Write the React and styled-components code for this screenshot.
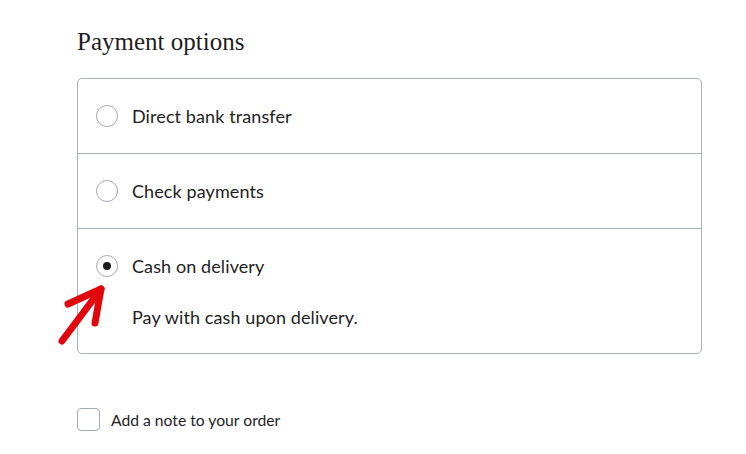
import React, { useState } from "react";
import styled, { createGlobalStyle } from "styled-components";

const GlobalStyle = createGlobalStyle`
  html, body {
    margin: 0;
    padding: 0;
    background: #ffffff;
  }
  body {
    font-family: "Lato", "Noto Sans", sans-serif;
    color: #1e1e1e;
  }
`;

const Page = styled.div`
  position: relative;
  width: 746px;
  height: 454px;
  padding: 27px 44px 0 77px;
  box-sizing: border-box;
`;

const Heading = styled.h2`
  margin: 0 0 22px;
  font-family: "Liberation Serif", "DejaVu Serif", serif;
  font-weight: 400;
  font-size: 25px;
  line-height: 29px;
  color: #1e1e1e;
`;

const OptionList = styled.div`
  border: 1px solid #a9b2bb;
  border-radius: 5px;
  width: 625px;
  box-sizing: border-box;
`;

const Option = styled.div`
  border-top: ${(p) => (p.$first ? "none" : "1px solid #a9b2bb")};
`;

const OptionHead = styled.label`
  display: flex;
  align-items: center;
  gap: 14px;
  height: 74px;
  padding: 0 18px;
  cursor: pointer;
  font-size: 18px;
  letter-spacing: 0.1px;
  color: #1e1e1e;
`;

const Radio = styled.span`
  width: 22px;
  height: 22px;
  border-radius: 50%;
  border: 1px solid #a3a9b0;
  box-sizing: border-box;
  display: flex;
  align-items: center;
  justify-content: center;
  flex: none;

  &::after {
    content: "";
    width: 8px;
    height: 8px;
    border-radius: 50%;
    background: #1e1e1e;
    display: ${(p) => (p.$checked ? "block" : "none")};
  }
`;

const Description = styled.p`
  margin: 0;
  padding: 2px 18px 24px 54px;
  font-size: 18px;
  letter-spacing: 0.1px;
  line-height: 24px;
  color: #1e1e1e;
`;

const NoteRow = styled.label`
  display: flex;
  align-items: center;
  gap: 11px;
  margin-top: 54px;
  font-size: 15.7px;
  color: #1e1e1e;
  cursor: pointer;
`;

const Checkbox = styled.span`
  width: 23px;
  height: 23px;
  border: 1px solid #a3a9b0;
  border-radius: 4px;
  box-sizing: border-box;
  flex: none;
`;

const Pointer = styled.svg`
  position: absolute;
  left: 52px;
  top: 278px;
  pointer-events: none;
`;

const options = [
  { id: "bacs", label: "Direct bank transfer" },
  { id: "cheque", label: "Check payments" },
  { id: "cod", label: "Cash on delivery", note: "Pay with cash upon delivery." },
];

export default function App() {
  const [selected, setSelected] = useState("cod");
  return (
    <>
      <GlobalStyle />
      <Page>
        <Heading>Payment options</Heading>
        <OptionList>
          {options.map((o, i) => (
            <Option key={o.id} $first={i === 0}>
              <OptionHead onClick={() => setSelected(o.id)}>
                <Radio $checked={selected === o.id} />
                {o.label}
              </OptionHead>
              {selected === o.id && o.note && <Description>{o.note}</Description>}
            </Option>
          ))}
        </OptionList>
        <NoteRow>
          <Checkbox />
          Add a note to your order
        </NoteRow>
        <Pointer width="60" height="72" viewBox="0 0 60 72">
          <g stroke="#e0060b" strokeWidth="7" strokeLinecap="round" strokeLinejoin="round" fill="none">
            <path d="M10 63 L49 11" />
            <path d="M16 26 L49 11 L43 45" />
          </g>
        </Pointer>
      </Page>
    </>
  );
}
